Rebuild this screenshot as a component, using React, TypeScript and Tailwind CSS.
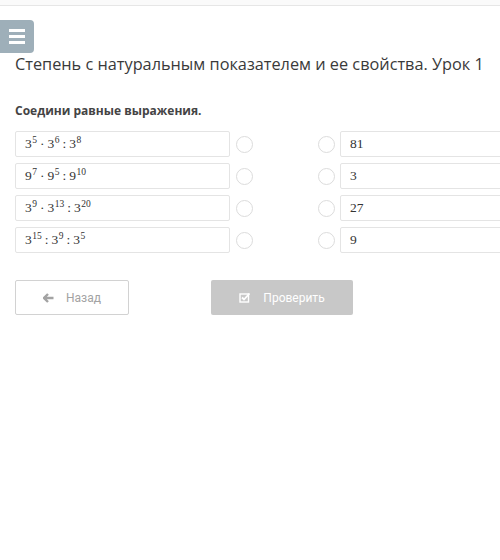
import React from "react";

const serif = { fontFamily: '"Liberation Serif", "DejaVu Serif", serif' };

function Expr({ parts }: { parts: [string, string, string?][] }) {
  return (
    <span style={serif} className="text-[13.5px] text-[#333]">
      {parts.map(([b, e, op], i) => (
        <React.Fragment key={i}>
          {b}
          <sup className="text-[9.5px] ml-[0.5px]">{e}</sup>
          {op && <span className="mx-[3px]">{op}</span>}
        </React.Fragment>
      ))}
    </span>
  );
}

const Circle = () => (
  <div className="w-[17px] h-[17px] rounded-full border-[1.5px] border-[#dcdcdc] bg-white shrink-0" />
);

export default function App() {
  const left: [string, string, string?][][] = [
    [["3", "5", "·"], ["3", "6", ":"], ["3", "8"]],
    [["9", "7", "·"], ["9", "5", ":"], ["9", "10"]],
    [["3", "9", "·"], ["3", "13", ":"], ["3", "20"]],
    [["3", "15", ":"], ["3", "9", ":"], ["3", "5"]],
  ];
  const right = ["81", "3", "27", "9"];
  return (
    <div
      className="w-[500px] h-[560px] bg-white overflow-hidden relative"
      style={{ fontFamily: '"Open Sans", "Noto Sans", sans-serif' }}
    >
      <div className="h-[6px] border-b border-[#e6e6e6] bg-[#fafafa]" />
      <div className="mt-[14px] w-[34px] h-[33px] bg-[#9eafb9] rounded-r-[4px] flex flex-col items-center justify-center gap-[3px]">
        <div className="w-[16px] h-[3px] bg-white" />
        <div className="w-[16px] h-[3px] bg-white" />
        <div className="w-[16px] h-[3px] bg-white" />
      </div>
      <div className="pl-[15px]">
        <div className="text-[16.3px] leading-[22px] text-[#3a3a3a] whitespace-nowrap">
          Степень с натуральным показателем и ее свойства. Урок 1
        </div>
        <div className="mt-[27px] text-[12px] leading-[18px] font-bold text-[#444]">
          Соедини равные выражения.
        </div>
        <div className="mt-[11px] flex flex-col gap-[6px]">
          {left.map((p, i) => (
            <div key={i} className="flex items-center h-[26px]">
              <div className="shrink-0 w-[215px] h-[26px] border border-[#e4e4e4] rounded-[2px] pl-[9px] flex items-center">
                <Expr parts={p} />
              </div>
              <div className="ml-[6px] shrink-0"><Circle /></div>
              <div className="ml-[65px] shrink-0"><Circle /></div>
              <div
                className="shrink-0 ml-[5px] w-[180px] h-[26px] border border-[#e4e4e4] rounded-[2px] pl-[9px] flex items-center text-[13.5px] text-[#333]"
                style={serif}
              >
                {right[i]}
              </div>
            </div>
          ))}
        </div>
        <div className="mt-[27px] flex items-center" style={{ fontFamily: 'Roboto, "Open Sans", sans-serif' }}>
          <div className="w-[114px] h-[35px] border border-[#d2d2d2] rounded-[2px] flex items-center justify-center gap-[12px] text-[12px] text-[#a3a3a3]">
            <svg width="11" height="10" viewBox="0 0 11 10">
              <path d="M5 1 L1 5 L5 9 M1 5 H10.5" stroke="#a3a3a3" strokeWidth="2.4" fill="none" strokeLinejoin="miter" />
            </svg>
            <span>Назад</span>
          </div>
          <div className="ml-[82px] w-[142px] h-[35px] bg-[#c8c8c8] rounded-[2px] flex items-center justify-center gap-[12px] text-[12px] text-white">
            <svg width="12" height="11" viewBox="0 0 12 11">
              <rect x="1" y="2" width="8.5" height="8" stroke="white" strokeWidth="1.4" fill="none" />
              <path d="M3 5.5 L5 7.5 L10.5 1.5" stroke="white" strokeWidth="1.8" fill="none" />
            </svg>
            <span>Проверить</span>
          </div>
        </div>
      </div>
    </div>
  );
}
